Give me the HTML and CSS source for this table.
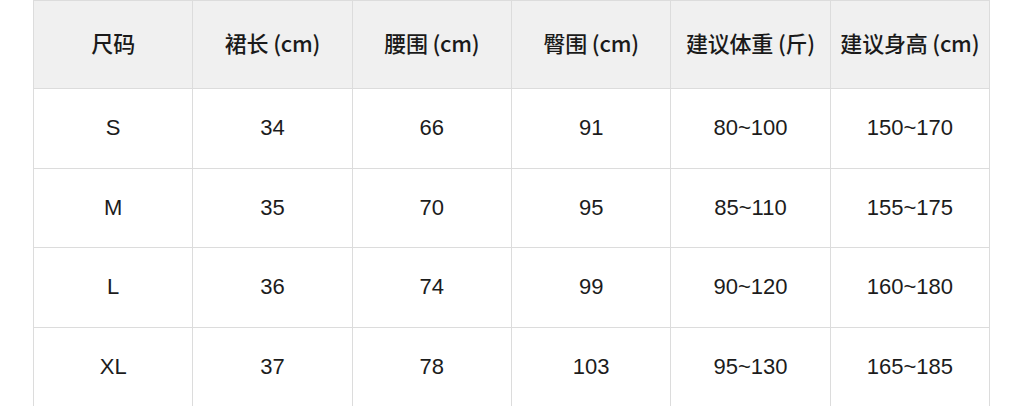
FILE: index.html
```html
<!DOCTYPE html>
<html lang="zh-CN">
<head>
<meta charset="utf-8">
<link rel="stylesheet" href="styles.css">
</head>
<body>
<table class="size-table">
  <thead>
    <tr class="head-row">
      <th>尺码</th>
      <th>裙长 (cm)</th>
      <th>腰围 (cm)</th>
      <th>臀围 (cm)</th>
      <th>建议体重 (斤)</th>
      <th>建议身高 (cm)</th>
    </tr>
  </thead>
  <tbody>
    <tr class="row">
      <td>S</td><td>34</td><td>66</td><td>91</td><td>80~100</td><td>150~170</td>
    </tr>
    <tr class="row">
      <td>M</td><td>35</td><td>70</td><td>95</td><td>85~110</td><td>155~175</td>
    </tr>
    <tr class="row">
      <td>L</td><td>36</td><td>74</td><td>99</td><td>90~120</td><td>160~180</td>
    </tr>
    <tr class="row">
      <td>XL</td><td>37</td><td>78</td><td>103</td><td>95~130</td><td>165~185</td>
    </tr>
  </tbody>
</table>
</body>
</html>
```

FILE: styles.css
```css
html, body {
  margin: 0;
  padding: 0;
  background: #ffffff;
}

body {
  padding-left: 33px;
  font-family: "Liberation Sans", "Noto Sans CJK SC", sans-serif;
  color: #1c1c1c;
}

.size-table {
  width: 957px;
  table-layout: fixed;
  border-collapse: collapse;
}

.size-table th,
.size-table td {
  border: 1px solid #dcdcdc;
  text-align: center;
  vertical-align: middle;
  font-size: 22px;
  padding: 0;
}

.size-table th {
  background: #f0f0f0;
  font-family: "Noto Sans CJK SC", "Liberation Sans", sans-serif;
  font-weight: 500;
  letter-spacing: -0.2px;
  padding-bottom: 6px;
  color: #1a1a1a;
}

.head-row {
  height: 88px;
}

.row {
  height: 79.5px;
}
```
